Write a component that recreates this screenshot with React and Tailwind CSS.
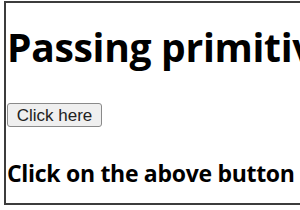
export default function App() {
  return (
    <div className="w-[300px] h-[210px] overflow-hidden bg-white pt-[1px] pl-[4px]">
      <div className="w-[600px] h-[204px] border-l-2 border-t-2 border-b-2 border-[#3c3c3c] pl-[1px] font-['Open_Sans',sans-serif] text-black">
        <h1 className="text-[39px] font-bold leading-[48px] mt-[20px] whitespace-nowrap tracking-[-0.3px]">
          Passing primitive values
        </h1>
        <button className="mt-[32px] h-[24px] w-[95px] rounded-[3px] border border-[#8a8a8a] bg-[#efefef] font-['Liberation_Sans',sans-serif] text-[17px] leading-none text-[#222]">
          Click here
        </button>
        <h3 className="mt-[31px] text-[23px] font-bold leading-[30px] whitespace-nowrap tracking-[-0.3px]">
          Click on the above button
        </h3>
      </div>
    </div>
  );
}
